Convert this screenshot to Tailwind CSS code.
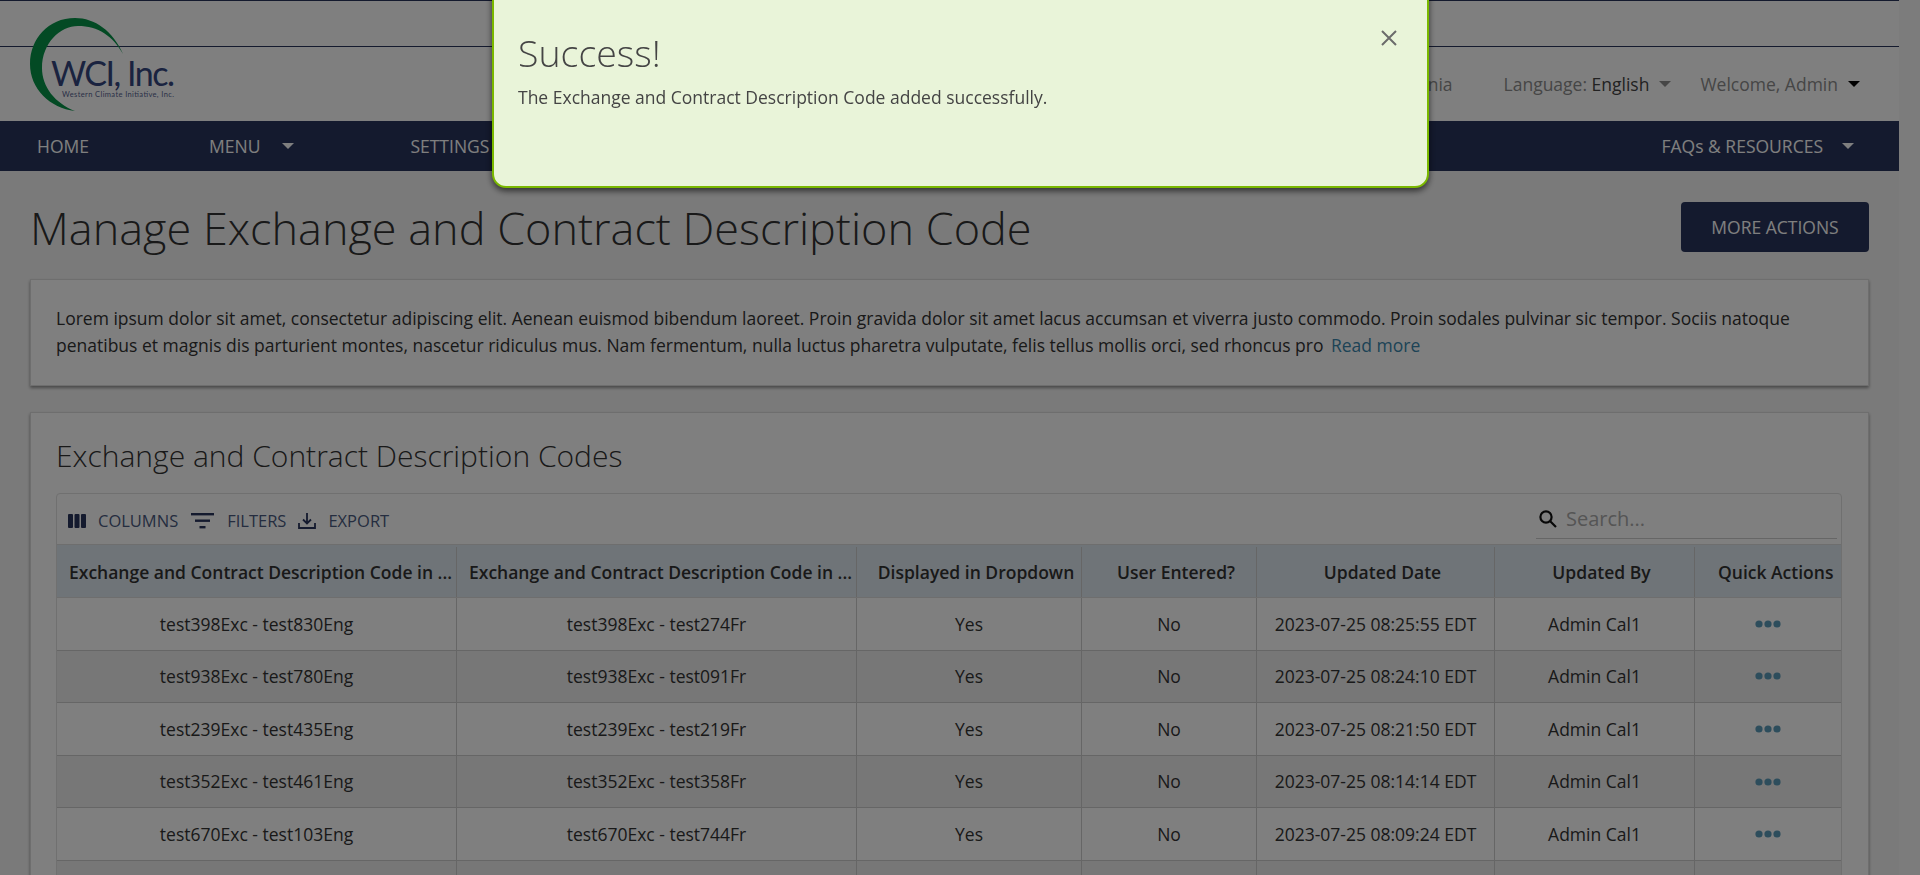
<!DOCTYPE html>
<html lang="en">
<head>
    <meta charset="UTF-8">
    <title>Manage Exchange and Contract Description Code</title>
    <script src="https://cdn.jsdelivr.net/npm/@tailwindcss/browser@4"></script>
</head>
<body class="h-[875px] overflow-hidden flex font-['Open_Sans',sans-serif] text-[#333] text-[17.5px] bg-[#f5f5f5]">
    <!-- Page -->
    <div class="w-[1899px] shrink-0">
        <!-- Header -->
        <header class="relative bg-white h-[121px] border-t border-[#28345c]">
            <div class="h-[46px] border-b border-[#28345c]"></div>
            <svg class="absolute left-0 top-0" width="180" height="115" viewBox="0 0 180 115">
                <path d="M123 53 C113 30 95 17 75 17 C48 17 30 38 30 63 C30 88 50 107 75 110 C55 102 42 86 42 67 C42 42 60 25 78 25 C98 25 113 35 123 53 Z" fill="#069448"/>
                <text x="51" y="85" font-family="Lato" font-size="34" fill="#344680" textLength="124">WCI, Inc.</text>
                <text x="62" y="96" font-family="Lato" font-size="7.5" fill="#54628f" textLength="112">Western Climate Initiative, Inc.</text>
            </svg>
            <div class="flex items-center justify-end h-[74px] pr-[39px] text-[#8c8c8c]">
                <span class="mr-[51px]">Jurisdiction: California</span>
                <span>Language:&nbsp;<span class="text-[#444]">English</span></span>
                <span class="ml-[10px] mr-[29px] border-x-[6px] border-x-transparent border-t-[6px] border-t-[#8c8c8c]"></span>
                <span>Welcome, Admin</span>
                <span class="ml-[10px] border-x-[6px] border-x-transparent border-t-[6px] border-t-black"></span>
            </div>
        </header>

        <!-- Nav -->
        <nav class="h-[50px] bg-[#28345c] flex items-center text-white pl-[37px] pr-[45px]">
            <span class="w-[172px]">HOME</span>
            <span>MENU</span>
            <span class="ml-[22px] w-[128px]"><span class="block w-0 border-x-[6px] border-x-transparent border-t-[6px] border-t-white"></span></span>
            <span>SETTINGS</span>
            <span class="ml-auto">FAQs &amp; RESOURCES</span>
            <span class="ml-[19px] border-x-[6px] border-x-transparent border-t-[6px] border-t-white"></span>
        </nav>

        <main class="px-[30px]">
            <!-- Title -->
            <div class="flex items-center justify-between h-[108px] pt-[3px]">
                <h1 class="mt-[2px] text-[45px] font-light leading-none">Manage Exchange and Contract Description Code</h1>
                <button class="w-[188px] h-[50px] pt-[2px] bg-[#28345c] rounded text-white font-medium">MORE ACTIONS</button>
            </div>

            <!-- Description -->
            <section class="h-[107px] bg-white border border-[#ddd] shadow-[0_2px_3px_rgba(0,0,0,0.4)] px-[25px] pt-[25px] leading-[27px]">
                Lorem ipsum dolor sit amet, consectetur adipiscing elit. Aenean euismod bibendum laoreet. Proin gravida dolor sit amet lacus accumsan et viverra justo commodo. Proin sodales pulvinar sic tempor. Sociis natoque<br>
                penatibus et magnis dis parturient montes, nascetur ridiculus mus. Nam fermentum, nulla luctus pharetra vulputate, felis tellus mollis orci, sed rhoncus pro <a class="ml-[3px] text-[#3a87ad]">Read more</a>
            </section>

            <!-- Codes table card -->
            <section class="mt-[26px] bg-white border border-[#ddd] shadow-[0_2px_3px_rgba(0,0,0,0.4)] px-[25px] h-[600px]">
                <h2 class="h-[80px] pt-[22px] text-[30px] font-light leading-[42px]">Exchange and Contract Description Codes</h2>
                <div class="w-[1786px] border border-[#e0e0e0] rounded-t">
                    <!-- Toolbar -->
                    <div class="h-[50px] flex items-center pl-[11px] text-[16.5px] text-[#4a5a80]">
                        <svg class="mt-[4px]" width="18" height="14" viewBox="0 0 18 14" fill="#28345c"><rect width="5" height="14" rx="1"/><rect x="6.5" width="5" height="14" rx="1"/><rect x="13" width="5" height="14" rx="1"/></svg>
                        <span class="ml-[12px] mt-[5px]">COLUMNS</span>
                        <svg class="ml-[13px] mt-[4px]" width="23" height="16" viewBox="0 0 23 16" fill="#28345c"><rect width="23" height="2.4"/><rect x="4" y="6.5" width="15" height="2.4"/><rect x="8.5" y="13" width="6" height="2.4"/></svg>
                        <span class="ml-[13px] mt-[5px]">FILTERS</span>
                        <svg class="ml-[12px] mt-[4px]" width="18" height="18" viewBox="0 0 18 18" fill="none" stroke="#28345c" stroke-width="1.8"><path d="M9 1v10M5 7.5 9 11.5 13 7.5M1 11v5h16v-5"/></svg>
                        <span class="ml-[12px] mt-[5px]">EXPORT</span>
                        <div class="ml-auto mr-[4px] w-[301px] h-[44px] mt-[-4px] flex items-center border-b border-[#ccc]">
                            <svg class="ml-[2px] mt-[4px]" width="20" height="20" viewBox="0 0 20 20" fill="none" stroke="#111" stroke-width="2.2"><circle cx="8" cy="8" r="5.6"/><path d="M12 12l6 6"/></svg>
                            <span class="ml-[8px] mt-[4px] text-[20px] text-[#aaa]">Search...</span>
                        </div>
                    </div>

                    <!-- Table head -->
                    <div class="grid grid-cols-[400px_400px_225px_175px_238px_200px_146px] h-[54px] pt-[2px] bg-[#dfe9f0] border-y border-[#ddd] font-semibold">
                        <div class="pl-[12px] flex items-center border-r border-[#ccc] whitespace-nowrap">Exchange and Contract Description Code in ...</div>
                        <div class="pl-[12px] flex items-center border-r border-[#ccc] whitespace-nowrap">Exchange and Contract Description Code in ...</div>
                        <div class="pl-[14px] flex items-center justify-center border-r border-[#ccc]">Displayed in Dropdown</div>
                        <div class="pl-[14px] flex items-center justify-center border-r border-[#ccc]">User Entered?</div>
                        <div class="pl-[14px] flex items-center justify-center border-r border-[#ccc]">Updated Date</div>
                        <div class="pl-[14px] flex items-center justify-center border-r border-[#ccc]">Updated By</div>
                        <div class="pl-[23px] flex items-center whitespace-nowrap">Quick Actions</div>
                    </div>

                    <!-- Rows -->
                    <div id="rows"></div>
                </div>
            </section>
        </main>
    </div>

    <!-- Scrollbar strip -->
    <div class="w-[21px] shrink-0 bg-[#f8f8f8]"></div>

    <!-- Backdrop -->
    <div class="fixed inset-0 bg-black/50"></div>

    <!-- Success modal -->
    <div class="fixed left-[492px] top-[-10px] w-[937px] h-[198px] bg-[#e9f4d9] border-2 border-[#7ab800] rounded-b-[14px] shadow-[0_3px_6px_rgba(0,0,0,0.6)] pl-[24px] pt-[37px] text-[#444]">
        <h3 class="text-[37.5px] font-light leading-[48px]">Success!</h3>
        <p class="mt-[8px] leading-[24px]">The Exchange and Contract Description Code added successfully.</p>
        <svg class="absolute right-[30px] top-[38px]" width="16" height="16" viewBox="0 0 16 16" stroke="#6b6b6b" stroke-width="2"><path d="M1 1l14 14M15 1L1 15"/></svg>
    </div>

<script>
// Table rows
const rows = [
    ['test398Exc - test830Eng', 'test398Exc - test274Fr', '2023-07-25 08:25:55 EDT'],
    ['test938Exc - test780Eng', 'test938Exc - test091Fr', '2023-07-25 08:24:10 EDT'],
    ['test239Exc - test435Eng', 'test239Exc - test219Fr', '2023-07-25 08:21:50 EDT'],
    ['test352Exc - test461Eng', 'test352Exc - test358Fr', '2023-07-25 08:14:14 EDT'],
    ['test670Exc - test103Eng', 'test670Exc - test744Fr', '2023-07-25 08:09:24 EDT'],
    ['', '', '']
];
const cell = 'flex items-center justify-center border-r border-[#ccc]';
document.getElementById('rows').innerHTML = rows.map((r, i) => `
    <div class="grid grid-cols-[400px_400px_225px_175px_238px_200px_146px] h-[52.6px] border-b border-[#ccc] ${i % 2 ? 'bg-[#eeeeee]' : 'bg-white'}">
        <div class="${cell}">${r[0]}</div>
        <div class="${cell}">${r[1]}</div>
        <div class="${cell}">${r[0] ? 'Yes' : ''}</div>
        <div class="${cell}">${r[0] ? 'No' : ''}</div>
        <div class="${cell}">${r[2]}</div>
        <div class="${cell}">${r[0] ? 'Admin Cal1' : ''}</div>
        <div class="flex items-center justify-center">${r[0] ? '<svg width="26" height="8" viewBox="0 0 26 8" fill="#5b9ab8"><circle cx="4" cy="4" r="3.6"/><circle cx="13" cy="4" r="3.6"/><circle cx="22" cy="4" r="3.6"/></svg>' : ''}</div>
    </div>`).join('');
</script>
</body>
</html>
